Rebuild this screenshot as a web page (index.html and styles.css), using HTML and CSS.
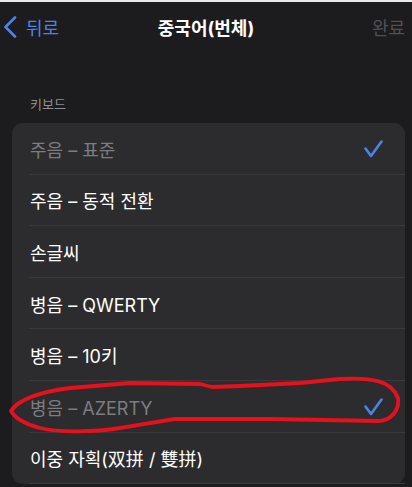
FILE: index.html
```html
<!DOCTYPE html>
<html lang="ko">
<head>
<meta charset="UTF-8" />
<meta name="viewport" content="width=device-width, initial-scale=1" />
<title>중국어(번체)</title>
<link rel="stylesheet" href="styles.css">
</head>
<body>

<div class="top-edge"></div>

<!-- Navigation bar -->
<div class="nav">
  <a class="nav-back" href="#">
    <svg width="14" height="22" viewBox="0 0 14 22"><path d="M12 1.5 L2.5 11 L12 20.5" fill="none" stroke="#4b83e6" stroke-width="2.6" stroke-linecap="round" stroke-linejoin="round"/></svg>
    <span>뒤로</span>
  </a>
  <div class="nav-title">중국어(번체)</div>
  <div class="nav-done">완료</div>
</div>

<p class="section-label">키보드</p>

<!-- Keyboard list -->
<div class="card">
  <div class="row"><div class="row-inner dim"><span>주음 – 표준</span>
    <svg class="check" width="19" height="18" viewBox="0 0 19 18"><path d="M1.5 8.5 L7 16 L17.5 1.5" fill="none" stroke="#4b83e6" stroke-width="2.6" stroke-linecap="round" stroke-linejoin="round"/></svg>
  </div></div>
  <div class="row"><div class="row-inner"><span>주음 – 동적 전환</span></div></div>
  <div class="row"><div class="row-inner"><span>손글씨</span></div></div>
  <div class="row"><div class="row-inner"><span>병음 – QWERTY</span></div></div>
  <div class="row"><div class="row-inner"><span>병음 – 10키</span></div></div>
  <div class="row"><div class="row-inner dim"><span>병음 – AZERTY</span>
    <svg class="check" width="19" height="18" viewBox="0 0 19 18"><path d="M1.5 8.5 L7 16 L17.5 1.5" fill="none" stroke="#4b83e6" stroke-width="2.6" stroke-linecap="round" stroke-linejoin="round"/></svg>
  </div></div>
  <div class="row"><div class="row-inner"><span>이중 자획(双拼 / 雙拼)</span></div></div>
</div>

<!-- hand-drawn annotation -->
<svg class="scribble" width="412" height="487" viewBox="0 0 412 487">
  <path d="M11 411 C 18 400, 40 392, 70 388 L 130 383 L 200 384 L 212 387 L 240 386 L 300 383 L 340 379 C 372 377, 392 381, 398 398 C 400 411, 390 421, 378 421 L 270 419 L 175 419 C 160 421, 140 425, 120 428 C 95 432, 60 433, 40 428 C 25 424, 15 418, 11 411 Z" fill="none" stroke="#e8101c" stroke-width="3.8" stroke-linejoin="round"/>
</svg>

</body>
</html>
```

FILE: styles.css
```css
body {
  margin: 0;
  background: #1c1c1e;
  font-family: "Inter", "Noto Sans CJK KR", sans-serif;
  color: #ffffff;
  overflow: hidden;
  height: 487px;
}
.top-edge {
  height: 2px;
  background: #e9e9ea;
}
.nav {
  height: 50px;
  display: grid;
  grid-template-columns: 1fr auto 1fr;
  align-items: center;
}
.nav-back {
  display: flex;
  align-items: center;
  gap: 9px;
  padding-left: 3px;
  color: #4b83e6;
  text-decoration: none;
  font-size: 18px;
}
.nav-title {
  font-size: 18px;
  font-weight: 700;
}
.nav-done {
  justify-self: end;
  padding-right: 7px;
  font-size: 18px;
  color: #505054;
}
.section-label {
  margin: 0;
  padding: 44px 30px 11px;
  font-size: 13px;
  line-height: 16px;
  color: #8e8e93;
}
.card {
  margin: 0 7px 0 12px;
  background: #2c2c2e;
  border-radius: 11px;
}
.row {
  padding-left: 17px;
}
.row-inner {
  height: 51.6px;
  box-sizing: border-box;
  border-bottom: 1px solid #3a3a3c;
  display: flex;
  align-items: center;
  justify-content: space-between;
  padding: 1px 22px 0 1px;
  font-size: 18px;
}
.row-inner.dim {
  color: #7d7d81;
}
.scribble {
  position: absolute;
  left: 0;
  top: 0;
  pointer-events: none;
}
```
